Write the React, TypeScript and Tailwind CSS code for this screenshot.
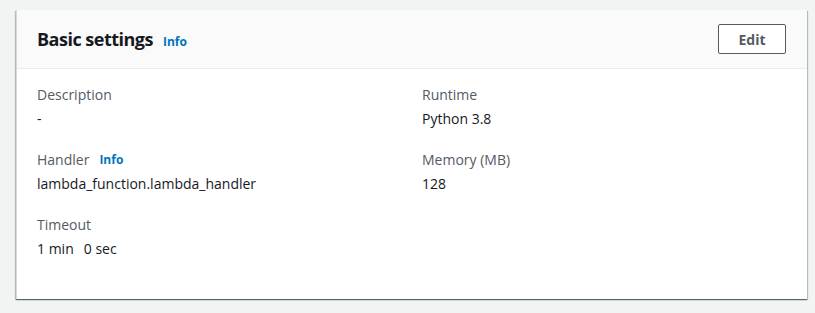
const font = { fontFamily: '"Open Sans", "Noto Sans", Arial, sans-serif' };

function Info() {
  return <a className="text-[12px] font-bold text-[#0073bb] leading-none ml-[10px]">Info</a>;
}

function Field({ label, value, info }: { label: string; value: React.ReactNode; info?: boolean }) {
  return (
    <div className="flex flex-col gap-[2px]">
      <div className="flex items-center text-[14px] leading-[22px] text-[#545b64]">
        {label}
        {info && <Info />}
      </div>
      <div className="text-[14px] leading-[22px] text-[#16191f]">{value}</div>
    </div>
  );
}

export default function App() {
  return (
    <div className="w-[815px] h-[313px] bg-[#f2f3f3] pt-[10px] pl-[16px] pr-[8px]" style={font}>
      <div className="bg-white border-l border-[#d5dbdb] shadow-[0_1px_1px_0_rgba(0,28,36,0.45),1px_1px_1px_0_rgba(0,28,36,0.2),-1px_1px_1px_0_rgba(0,28,36,0.2)]">
        <div className="flex items-center justify-between h-[59px] pl-[20px] pr-[21px] bg-[#fafafa] border-b border-[#eaeded]">
          <div className="flex items-baseline">
            <h2 className="text-[18px] font-bold text-[#16191f] leading-none tracking-[-0.5px]">Basic settings</h2>
            <Info />
          </div>
          <button className="h-[30px] w-[68px] border border-[#545b64] rounded-[2px] text-[14px] font-bold text-[#545b64] bg-white">
            Edit
          </button>
        </div>
        <div className="grid grid-cols-2 gap-x-5 gap-y-[19px] px-[20px] pt-[15px] pb-[39px]">
          <Field label="Description" value="-" />
          <Field label="Runtime" value="Python 3.8" />
          <Field label="Handler" value="lambda_function.lambda_handler" info />
          <Field label="Memory (MB)" value="128" />
          <Field
            label="Timeout"
            value={
              <span className="flex gap-[10px]">
                <span>1 min</span>
                <span>0 sec</span>
              </span>
            }
          />
        </div>
      </div>
    </div>
  );
}
